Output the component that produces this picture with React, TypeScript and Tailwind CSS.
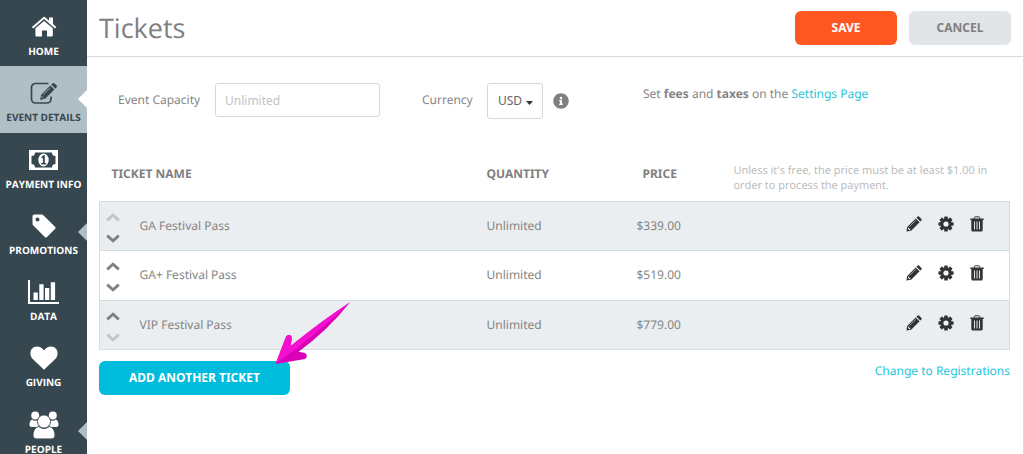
import type { ReactNode } from "react";
import { FaInfoCircle } from "react-icons/fa";

function HomeIcon() {
  return (
    <svg width="26" height="22" viewBox="0 0 26 22" fill="currentColor" aria-hidden="true">
      <path d="M12.2 1.2a1.4 1.4 0 0 1 1.8 0L18 4.6V1.4h4v6.6l3.3 2.9-1.3 1.5L13.1 3.1 2.200 12.400.9 10.900z" />
      <path d="M13.100 4.900 21.800 12.300V19.500a1 1 0 0 1-1 1H16V14.500H11V20.500H5.400a1 1 0 0 1-1-1V12.300z" />
    </svg>
  );
}

function EditIcon() {
  return (
    <svg width="28" height="24" viewBox="0 0 28 24" aria-hidden="true">
      <path d="M18.500 2.500H5.500a4 4 0 0 0-4 4V18a4 4 0 0 0 4 4H17a4 4 0 0 0 4-4V15.500" fill="none" stroke="currentColor" strokeWidth="1.700" />
      <path d="M11.200 13.700 20.300 4.500l4.100 4.100-9.200 9.200-5.100 1.100z" fill="currentColor" />
      <path d="m21.200 3.600 1.200-1.200a1.600 1.600 0 0 1 2.200 0l1.900 1.900a1.600 1.600 0 0 1 0 2.200l-1.200 1.200z" fill="currentColor" />
      <path d="M13.400 13.400 20 6.800M11.300 15.100l2.500 2.500" fill="none" stroke="#b0bec5" strokeWidth="0.800" />
    </svg>
  );
}

function MoneyIcon() {
  return (
    <svg width="29" height="20" viewBox="0 0 29 20" aria-hidden="true">
      <path d="M0 0h29v20H0z" fill="currentColor" />
      <path d="M6 2.500h17a3.500 3.500 0 0 0 3.500 3.500v8a3.500 3.500 0 0 0-3.500 3.500H6A3.500 3.500 0 0 0 2.500 14V6A3.500 3.500 0 0 0 6 2.500z" fill="#37474f" />
      <ellipse cx="14.500" cy="10" rx="5.200" ry="6.500" fill="currentColor" />
      <path d="M12.300 7.200 14.200 5.300h1.600v7.700h1.400v1.500h-5V13h1.700V7.700l-1 .7z" fill="#37474f" />
    </svg>
  );
}

function TagIcon() {
  return (
    <svg width="24" height="24" viewBox="0 0 24 24" aria-hidden="true">
      <path d="M.5 2.200A1.700 1.700 0 0 1 2.200.5H9.500a3 3 0 0 1 2.100.9L23 12.800a1.500 1.500 0 0 1 0 2.200l-8 8a1.500 1.500 0 0 1-2.200 0L1.400 11.600a3 3 0 0 1-.9-2.100zM5.500 3.500a2 2 0 1 0 0 4 2 2 0 0 0 0-4z" fill="currentColor" fillRule="evenodd" />
    </svg>
  );
}

function ChartIcon() {
  return (
    <svg width="31" height="24" viewBox="0 0 31 24" fill="currentColor" aria-hidden="true">
      <path d="M0 0h2v22h29v2H0zM5.500 12.500h4.300V20H5.500zM11.300 4.300h4.300V20h-4.300zM17 8h4.300v12H17zM22.800 2.300h4.300V20h-4.300z" />
    </svg>
  );
}

function HeartIcon() {
  return (
    <svg width="28" height="24" viewBox="0 0 28 24" fill="currentColor" aria-hidden="true">
      <path d="M14 23.800 3 13.200C1.200 11.400.4 9.600.4 7.200.4 3.300 3.200.5 7 .5c2.800 0 5.200 1.300 7 4 1.800-2.700 4.200-4 7-4 3.800 0 6.600 2.800 6.600 6.700 0 2.400-.8 4.200-2.600 6z" />
    </svg>
  );
}

function PeopleIcon() {
  return (
    <svg width="30" height="28" viewBox="0 0 30 28" aria-hidden="true">
      <g fill="currentColor">
        <circle cx="6.200" cy="4.500" r="4" />
        <circle cx="23.800" cy="4.500" r="4" />
        <path d="M3 8.500c2 1.500 4 1.500 6.500.3V16H2.700C1 16 .5 15 .5 13.500.5 11 1.300 9.500 3 8.500zM27 8.500c-2 1.500-4 1.500-6.500.3V16h6.800c1.700 0 2.200-1 2.200-2.500 0-2.500-.8-4-2.500-5z" />
      </g>
      <g fill="currentColor" stroke="#37474f" strokeWidth="0.900">
        <path d="M9.500 15.500c3.500 2.500 7.500 2.500 11 0 3.500 1 5.500 4.500 5.500 8.500 0 2.500-1.300 3.900-3.800 3.900H7.800C5.300 27.900 4 26.500 4 24c0-4 2-7.500 5.500-8.500z" />
        <circle cx="15" cy="10.500" r="6.600" />
      </g>
    </svg>
  );
}

function PencilIcon() {
  return (
    <svg width="16" height="16" viewBox="0 0 16 16" aria-hidden="true">
      <path d="M.4 15.600 1.200 10.900 9.700 2.400 13.600 6.300 5.100 14.800z" fill="currentColor" />
      <path d="m10.400 1.700.9-.9a1.400 1.400 0 0 1 2 0l1.900 1.900a1.400 1.400 0 0 1 0 2l-.9.900z" fill="currentColor" />
      <path d="M3.500 10.500 9.800 4.200" stroke="#c5c8ca" strokeWidth="0.700" fill="none" />
      <path d="m1.900 12.700 1.500 1.500.8-.2.100-1.200-1.300-.1-.1-1.100-.7.200z" fill="#eceff1" />
    </svg>
  );
}

function GearIcon() {
  return (
    <svg width="16" height="16" viewBox="0 0 16 16" aria-hidden="true">
      <g fill="currentColor">
        <rect x="6.200" y="0.400" width="3.600" height="15.200" rx="0.700" />
        <rect x="6.200" y="0.400" width="3.600" height="15.200" rx="0.700" transform="rotate(45 8 8)" />
        <rect x="6.200" y="0.400" width="3.600" height="15.200" rx="0.700" transform="rotate(90 8 8)" />
        <rect x="6.200" y="0.400" width="3.600" height="15.200" rx="0.700" transform="rotate(135 8 8)" />
        <circle cx="8" cy="8" r="5.700" />
      </g>
      <circle cx="8" cy="8" r="2.600" className="fill-[#f3f5f6]" />
    </svg>
  );
}

function TrashIcon() {
  return (
    <svg width="14" height="16" viewBox="0 0 14 16" aria-hidden="true">
      <path d="M4.300 2.800V1.600a.8.800 0 0 1 .8-.8h3.800a.8.800 0 0 1 .8.800v1.200" fill="none" stroke="currentColor" strokeWidth="1" />
      <path d="M.3 2.400h13.400v1.500H.3zM1.300 3.500h11.400v10.500a1.500 1.500 0 0 1-1.500 1.500H2.800A1.500 1.500 0 0 1 1.300 14z" fill="currentColor" />
      <path d="M4.500 5.500v8M7 5.500v8M9.500 5.500v8" stroke="#e2e5e7" strokeWidth="1" />
    </svg>
  );
}

function Chevron({ down = false }: { down?: boolean }) {
  return (
    <svg width="14" height="9" viewBox="0 0 14 9" fill="none" stroke="currentColor" strokeWidth="2.800" aria-hidden="true">
      <path d={down ? "M1.200 1.600 7 6.800l5.800-5.200" : "M1.200 7.400 7 2.200l5.800 5.200"} />
    </svg>
  );
}

type NavEntry = { label: string; icon: ReactNode; active?: boolean; marker?: boolean };

const nav: NavEntry[] = [
  { label: "HOME", icon: <HomeIcon /> },
  { label: "EVENT DETAILS", icon: <EditIcon />, active: true },
  { label: "PAYMENT INFO", icon: <MoneyIcon /> },
  { label: "PROMOTIONS", icon: <TagIcon />, marker: true },
  { label: "DATA", icon: <ChartIcon /> },
  { label: "GIVING", icon: <HeartIcon /> },
  { label: "PEOPLE", icon: <PeopleIcon />, marker: true },
];

function Sidebar() {
  return (
    <nav className="w-[87px] shrink-0 bg-[#37474f]">
      <ul className="grid h-[464px] grid-rows-7">
        {nav.map((item) => (
          <li key={item.label} className={item.active ? "relative bg-[#b0bec5] text-[#37474f]" : "relative text-white"}>
            <a href="#" className="flex h-full flex-col items-center pt-3 font-['Open_Sans',sans-serif] text-[10px] leading-[18px] font-bold whitespace-nowrap">
              <span className="flex h-[30px] items-center">{item.icon}</span>
              {item.label}
            </a>
            {(item.active || item.marker) && (
              <svg
                width="9"
                height="18"
                viewBox="0 0 9 18"
                className={item.active ? "absolute top-6 right-0 fill-white" : "absolute top-6 right-0 fill-[#b0bec5]"}
                aria-hidden="true"
              >
                <path d="M9 0v18L0 9z" />
              </svg>
            )}
          </li>
        ))}
      </ul>
    </nav>
  );
}

const tickets = [
  { name: "GA Festival Pass", price: "$339.00" },
  { name: "GA+ Festival Pass", price: "$519.00" },
  { name: "VIP Festival Pass", price: "$779.00" },
];

function TicketTable() {
  return (
    <table className="mt-[29px] h-[202px] w-full table-fixed border-collapse text-left">
      <colgroup>
        <col className="w-10" />
        <col />
        <col className="w-[150px]" />
        <col className="w-[97px]" />
        <col className="w-[276px]" />
      </colgroup>
      <thead>
        <tr className="h-[53px] text-[#808080]">
          <th colSpan={2} className="pl-3 font-bold">TICKET NAME</th>
          <th className="font-bold">QUANTITY</th>
          <th className="pl-1.5 font-bold">PRICE</th>
          <td className="pt-2 pr-4 font-['Open_Sans',sans-serif] text-[11px] leading-[15px] text-[#b8b8b8]">
            Unless it's free, the price must be at least $1.00 in order to process the payment.
          </td>
        </tr>
      </thead>
      <tbody className="border border-[#d3dce0]">
        {tickets.map((ticket, i) => (
          <tr key={ticket.name} className="h-[49px] border-y border-[#d3dce0] odd:bg-[#eaeef0]">
            <td>
              <div className="flex flex-col gap-3 pt-1 pl-1.5 text-[#808080]">
                <button type="button" aria-label={`Move ${ticket.name} up`} disabled={i === 0} className="w-fit disabled:text-[#c2c4c5]">
                  <Chevron />
                </button>
                <button type="button" aria-label={`Move ${ticket.name} down`} disabled={i === tickets.length - 1} className="w-fit disabled:text-[#c2c4c5]">
                  <Chevron down />
                </button>
              </div>
            </td>
            <td>{ticket.name}</td>
            <td>Unlimited</td>
            <td>{ticket.price}</td>
            <td>
              <div className="flex items-center justify-end gap-4 pr-[25px] pb-1 text-[#333]">
                <button type="button" aria-label={`Edit ${ticket.name}`}><PencilIcon /></button>
                <button type="button" aria-label={`Settings for ${ticket.name}`}><GearIcon /></button>
                <button type="button" aria-label={`Delete ${ticket.name}`}><TrashIcon /></button>
              </div>
            </td>
          </tr>
        ))}
      </tbody>
    </table>
  );
}

export default function App() {
  return (
    <div className="flex h-screen overflow-hidden bg-white font-['Noto_Sans','Open_Sans',sans-serif] text-xs leading-5 text-[#858585] [text-rendering:geometricPrecision]">
      <Sidebar />
      <main className="min-w-0 flex-1 self-stretch border-r border-[#d3dce0]">
        <header className="flex h-[57px] items-center justify-between border-b border-[#d3dce0] px-3">
          <h1 className="font-['Open_Sans',sans-serif] text-[27px] leading-8 text-[#808080]">Tickets</h1>
          <div className="flex gap-3 font-bold">
            <button type="button" className="h-[34px] w-[102px] rounded-md bg-[#ff5722] text-white">SAVE</button>
            <button type="button" className="h-[34px] w-[102px] rounded-md bg-[#e1e5e8] text-[#808080]">CANCEL</button>
          </div>
        </header>
        <div className="pr-[13px] pl-3">
          <div className="flex items-start pt-[26px] pl-[19px]">
            <label htmlFor="capacity" className="w-[97px] pt-[7px] whitespace-nowrap">Event Capacity</label>
            <input
              id="capacity"
              type="text"
              placeholder="Unlimited"
              className="h-[34px] w-[165px] rounded-[3px] border border-[#cfd8dc] px-[9px] placeholder:text-[#c2c2c2]"
            />
            <label htmlFor="currency" className="ml-[42px] w-[65px] pt-[7px]">Currency</label>
            <div className="relative">
              <select id="currency" className="h-9 w-14 appearance-none rounded-[3px] border border-[#cfd8dc] bg-white pl-2.5 text-[#666]">
                <option>USD</option>
              </select>
              <svg width="7" height="4" viewBox="0 0 7 4" className="pointer-events-none absolute top-[18px] right-2.5 fill-[#333]" aria-hidden="true">
                <path d="M0 0h7L3.500 4z" />
              </svg>
            </div>
            <FaInfoCircle className="mt-2.5 ml-2.5 size-4 text-[#808080]" />
            <p className="ml-[74px] pt-px whitespace-nowrap">
              Set <strong>fees</strong> and <strong>taxes</strong> on the{" "}
              <a href="#" className="text-[#26c6da]">Settings Page</a>
            </p>
          </div>
          <TicketTable />
          <div className="flex items-start justify-between pt-[11px]">
            <div className="relative">
              <button type="button" className="h-[34px] w-[191px] rounded-md bg-[#00bcdc] font-bold text-white">
                ADD ANOTHER TICKET
              </button>
              <svg width="78" height="64" viewBox="0 0 78 64" className="pointer-events-none absolute bottom-[30px] left-44" aria-hidden="true">
                <path d="M.5 63 10.700 36.500c1.300-4.200 6.800-3 6 1.200L15.700 45Q45 21 75 1.200 53 29 23.500 50.800L29 51.800c4 .6 3.700 6.200-.5 6.500z" fill="#d900b8" />
                <path d="M.5 63 10.700 36.500c1.300-4.200 6.800-3 6 1.200L15.700 45Q45 21 75 1.200 45 31 .5 63z" fill="#f50fce" />
              </svg>
            </div>
            <a href="#" className="text-[#26c6da]">Change to Registrations</a>
          </div>
        </div>
      </main>
    </div>
  );
}
